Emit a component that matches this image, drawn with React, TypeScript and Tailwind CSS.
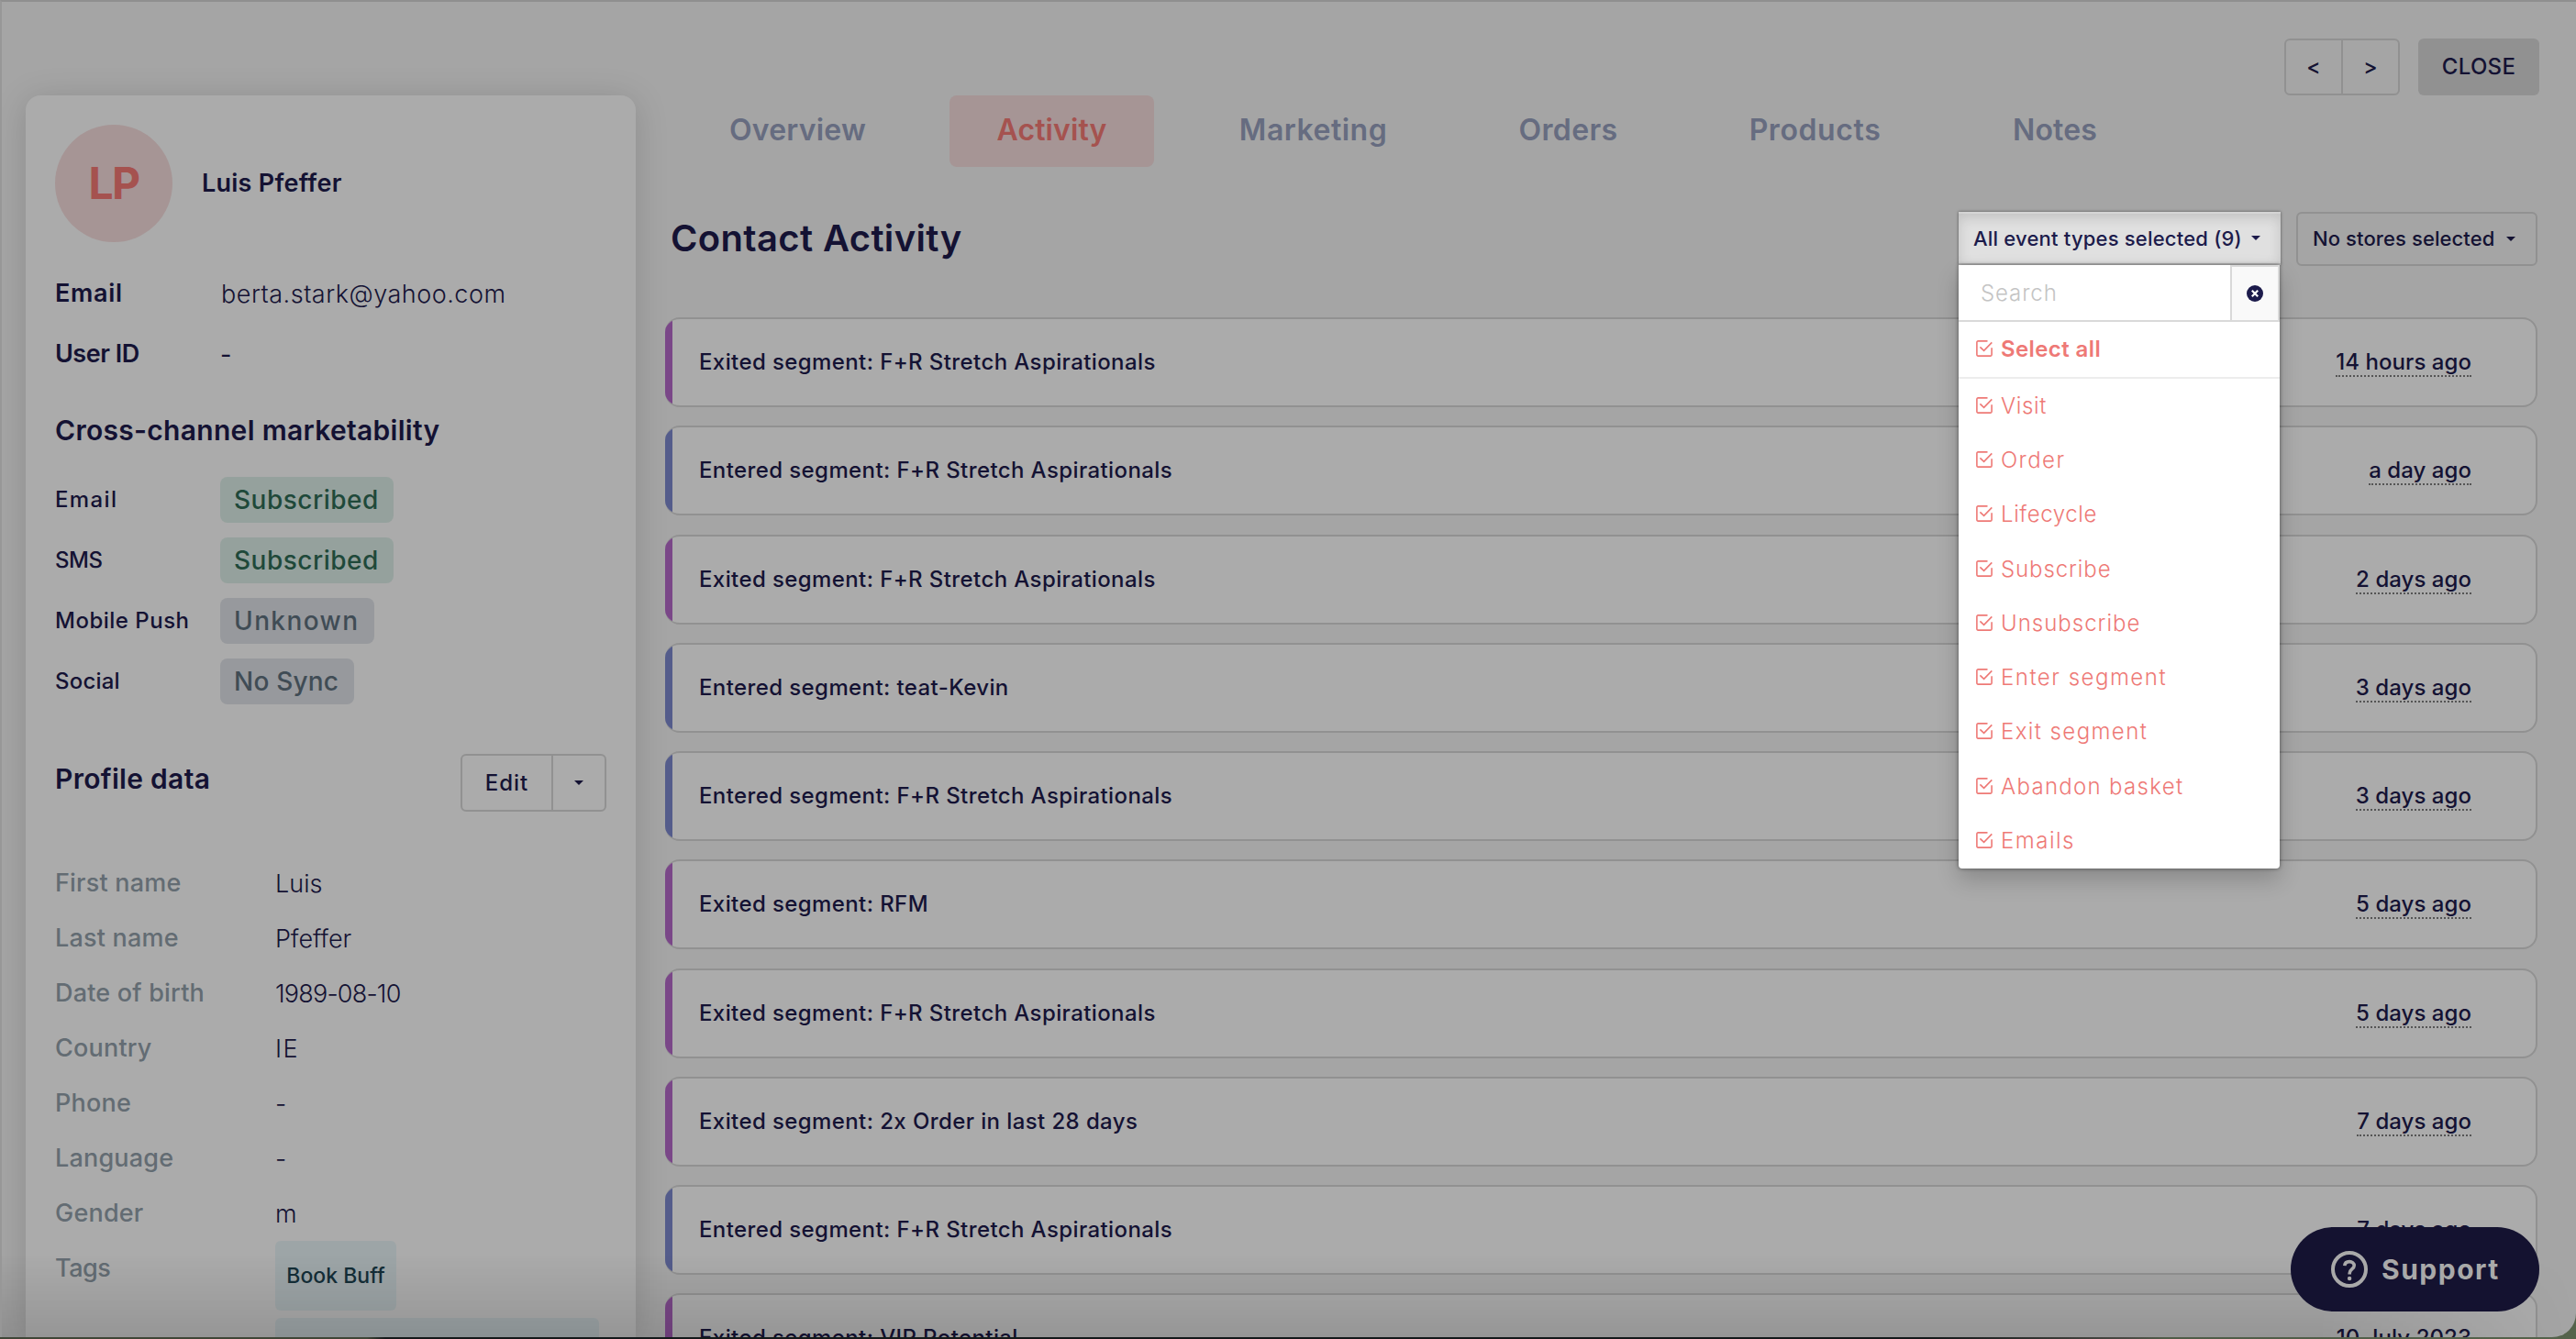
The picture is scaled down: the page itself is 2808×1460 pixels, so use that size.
import type { ReactNode } from 'react'

const tabs = [
  { label: 'Overview', cls: 'w-[251px] tracking-[0.2px] text-[#666c80]' },
  { label: 'Activity', cls: 'w-[223px] tracking-[0.1px] text-[#a5524f] bg-[#a69595] rounded-lg' },
  { label: 'Marketing', cls: 'w-[267px] tracking-[0.5px] text-[#666c80]' },
  { label: 'Orders', cls: 'w-[209px] tracking-[0.4px] text-[#666c80]' },
  { label: 'Products', cls: 'w-[249px] tracking-[0.6px] text-[#666c80]' },
  { label: 'Notes', cls: 'w-[194px] tracking-[0.1px] text-[#666c80]' },
]

const channels = [
  { label: 'Email', value: 'Subscribed', labelCls: 'tracking-[1.4px]', cls: 'w-[189px] tracking-[0.5px] bg-[#95a19d] text-[#1f493a]' },
  { label: 'SMS', value: 'Subscribed', labelCls: '-tracking-[0.4px]', cls: 'w-[189px] tracking-[0.5px] bg-[#95a19d] text-[#1f493a]' },
  { label: 'Mobile Push', value: 'Unknown', labelCls: 'tracking-[0.5px]', cls: 'w-[168px] tracking-[1.4px] bg-[#97999d] text-[#404c55]' },
  { label: 'Social', value: 'No Sync', labelCls: 'tracking-[0.2px]', cls: 'w-[146px] tracking-[0.2px] bg-[#97999d] text-[#404c55]' },
]

const profile = [
  { label: 'First name', value: 'Luis', cls: '' },
  { label: 'Last name', value: 'Pfeffer', cls: '-tracking-[0.1px]' },
  { label: 'Date of birth', value: '1989-08-10', cls: '-tracking-[0.8px]' },
  { label: 'Country', value: 'IE', cls: 'tracking-[1.5px]' },
  { label: 'Phone', value: '-', cls: '' },
  { label: 'Language', value: '-', cls: '' },
  { label: 'Gender', value: 'm', cls: '' },
]

const purple = 'bg-[#7a4788]'
const blue = 'bg-[#545c8b]'

const events = [
  { text: 'Exited segment: F+R Stretch Aspirationals', when: '14 hours ago', bar: purple },
  { text: 'Entered segment: F+R Stretch Aspirationals', when: 'a day ago', bar: blue },
  { text: 'Exited segment: F+R Stretch Aspirationals', when: '2 days ago', bar: purple },
  { text: 'Entered segment: teat-Kevin', when: '3 days ago', bar: blue },
  { text: 'Entered segment: F+R Stretch Aspirationals', when: '3 days ago', bar: blue },
  { text: 'Exited segment: RFM', when: '5 days ago', bar: purple },
  { text: 'Exited segment: F+R Stretch Aspirationals', when: '5 days ago', bar: purple },
  { text: 'Exited segment: 2x Order in last 28 days', when: '7 days ago', bar: purple },
  { text: 'Entered segment: F+R Stretch Aspirationals', when: '7 days ago', bar: blue },
  { text: 'Exited segment: VIP Potential', when: '10 July 2023', bar: purple },
]

const eventTypes = [
  { label: 'Visit', cls: 'tracking-[0.6px]' },
  { label: 'Order', cls: 'tracking-[1.4px]' },
  { label: 'Lifecycle', cls: 'tracking-[0.6px]' },
  { label: 'Subscribe', cls: 'tracking-[0.9px]' },
  { label: 'Unsubscribe', cls: 'tracking-[1px]' },
  { label: 'Enter segment', cls: 'tracking-[1.5px]' },
  { label: 'Exit segment', cls: 'tracking-[1.4px]' },
  { label: 'Abandon basket', cls: 'tracking-[1.3px]' },
  { label: 'Emails', cls: 'tracking-[1.5px]' },
]

function Caret() {
  return (
    <svg width="10" height="5" viewBox="0 0 10 5" fill="currentColor" className="shrink-0">
      <path d="M0 0h10L5 5z" />
    </svg>
  )
}

function CheckSquare() {
  return (
    <svg width="18" height="18" viewBox="0 0 18 18" fill="none" stroke="currentColor" strokeWidth="1.6" className="mb-[2px] shrink-0">
      <path d="M12.5 .9H2.2A1.3 1.3 0 0 0 .9 2.2v13.6a1.3 1.3 0 0 0 1.3 1.3h13.6a1.3 1.3 0 0 0 1.3-1.3V8.2" />
      <path d="M4.4 7.4 8.6 11.4 17.3 2.4" />
    </svg>
  )
}

function SectionTitle({ children }: { children: ReactNode }) {
  return <h3 className="text-[30px] font-semibold tracking-[0.3px]">{children}</h3>
}

function Sidebar() {
  return (
    <aside className="relative ml-[26px] flex h-[1354px] w-[665px] shrink-0 flex-col rounded-t-2xl bg-[#ababab] px-8 pt-8 shadow-[0_4px_36px_rgba(0,0,0,0.15)]">
      <div className="flex h-32 shrink-0 items-center">
        <div className="flex size-32 items-center justify-center rounded-full bg-[#a69595] text-[48px] font-bold -tracking-[1.5px] text-[#a5524f]">LP</div>
        <div className="ml-8 text-[27px] font-semibold tracking-[0.25px]">Luis Pfeffer</div>
      </div>

      <div className="mt-[23px] flex h-[66px] shrink-0 items-center text-[27px]">
        <div className="w-[181px] pt-px font-semibold tracking-[0.7px]">Email</div>
        <div className="pt-[3px] font-[350] tracking-[0.5px]">berta.stark@yahoo.com</div>
      </div>
      <div className="flex h-[66px] shrink-0 items-center text-[27px]">
        <div className="w-[180px] pt-px font-semibold -tracking-[0.5px]">User ID</div>
        <div className="pt-[3px]">-</div>
      </div>

      <div className="mt-[17px] flex h-[67px] shrink-0 items-center">
        <SectionTitle>Cross-channel marketability</SectionTitle>
      </div>
      <div className="mt-[9px] flex shrink-0 flex-col">
        {channels.map((c) => (
          <div key={c.label} className="flex h-[66px] items-center">
            <div className={`w-[180px] text-[24px] font-[480] ${c.labelCls}`}>{c.label}</div>
            <div className={`flex h-[50px] items-center rounded-lg pl-[15px] text-[28px] font-[480] ${c.cls}`}>{c.value}</div>
          </div>
        ))}
      </div>

      <div className="mt-[46px] flex h-[63px] shrink-0 justify-between">
        <div className="flex h-[55px] items-center">
          <SectionTitle>Profile data</SectionTitle>
        </div>
        <div className="flex w-[159px] rounded-md border-2 border-[#919191]">
          <div className="flex w-[97px] items-center justify-center text-[24px] font-[480] tracking-[1px]">Edit</div>
          <div className="flex flex-1 items-center justify-center border-l-2 border-[#919191]">
            <Caret />
          </div>
        </div>
      </div>

      <div className="mt-[47px] flex shrink-0 flex-col text-[27px]">
        {profile.map((p) => (
          <div key={p.label} className="flex h-[60px] items-center pt-[2px]">
            <div className="w-[240px] font-[500] tracking-[0.2px] text-[#636c73]">{p.label}</div>
            <div className={`pt-[2px] font-[350] ${p.cls}`}>{p.value}</div>
          </div>
        ))}
        <div className="flex">
          <div className="flex h-[60px] w-[240px] items-center pt-[2px] font-[500] -tracking-[0.5px] text-[#636c73]">Tags</div>
          <div className="flex flex-col items-start gap-2 pt-px">
            <div className="flex h-[76px] w-[132px] items-center justify-center rounded-md bg-[#9da5a7] text-[23px] font-[550] text-[#142e38]">Book Buff</div>
            <div className="h-[76px] w-[353px] rounded-md bg-[#9da5a7]" />
          </div>
        </div>
      </div>
    </aside>
  )
}

function EventTypeFilter() {
  return (
    <div className="relative z-10 h-[58px] w-[351px] text-[#1c1b4b]">
      <div className="flex h-[58px] items-center justify-between border-b-2 border-[#b5b5b5] bg-[#e0e0e0] pl-[16px] pr-[22px] shadow-[inset_0_6px_14px_rgba(0,0,0,0.14),inset_0_2px_0_#efefef,0_0_3px_rgba(0,0,0,0.5)]">
        <span className="whitespace-nowrap pt-[2px] text-[22px] font-[480] tracking-[0.2px]">All event types selected (9)</span>
        <Caret />
      </div>
      <div className="absolute left-0 top-[58px] w-[350px] rounded-b bg-white shadow-[0_12px_24px_rgba(0,0,0,0.2),0_0_4px_rgba(0,0,0,0.45)]">
        <div className="flex h-[62px] border-b-2 border-[#d9d9d9]">
          <div className="flex flex-1 items-center pl-[24px] pt-px text-[24px] font-light tracking-[0.9px] text-[#c4c4c4]">Search</div>
          <div className="flex w-[54px] items-center justify-center border-x-2 border-t-2 border-[#d9d9d9] bg-[#f9f9f9]">
            <svg width="18" height="18" viewBox="0 0 18 18">
              <circle cx="9" cy="9" r="9" fill="currentColor" />
              <path d="M5.8 5.8l6.4 6.4M12.2 5.8l-6.4 6.4" stroke="white" strokeWidth="2.2" />
            </svg>
          </div>
        </div>
        <div className="flex h-[62px] items-center gap-[9px] border-b-2 border-[#ededed] pl-[19px] text-[24px] font-semibold tracking-[0.4px] text-[#ee7976]">
          <CheckSquare />
          Select all
        </div>
        <div className="flex flex-col text-[24px] font-[350] text-[#ee7976]">
          {eventTypes.map((t) => (
            <div key={t.label} className={`flex h-[59.3px] items-center gap-[9px] pl-[19px] ${t.cls}`}>
              <CheckSquare />
              {t.label}
            </div>
          ))}
        </div>
      </div>
    </div>
  )
}

function Activity() {
  return (
    <main className="relative ml-8 flex h-[1354px] w-[2041px] flex-col">
      <nav className="ml-[19px] flex h-[78px] shrink-0 gap-10">
        {tabs.map((t) => (
          <div key={t.label} className={`flex items-center justify-center pb-[2px] text-[32px] font-semibold ${t.cls}`}>{t.label}</div>
        ))}
      </nav>

      <div className="mt-[49px] flex h-[58px] shrink-0 items-center">
        <h2 className="ml-[6px] flex-1 text-[40px] font-semibold tracking-[0.35px]">Contact Activity</h2>
        <EventTypeFilter />
        <div className="ml-[17px] flex h-[59px] w-[263px] items-center justify-between rounded-md border-2 border-[#919191] pl-[16px] pr-[22px]">
          <span className="whitespace-nowrap text-[22px] font-[480] tracking-[0.1px]">No stores selected</span>
          <Caret />
        </div>
      </div>

      <div className="mt-[57px] flex flex-col gap-[20.25px]">
        {events.map((e, i) => (
          <div key={i} className="flex h-[98px] shrink-0 overflow-hidden rounded-2xl border-2 border-l-0 border-[#919191] bg-[#ababab] text-[24px] font-[480]">
            <div className={`w-2 shrink-0 ${e.bar}`} />
            <div className="flex flex-1 items-center justify-between pl-[29px] pr-[70px]">
              <span className="tracking-[0.4px]">{e.text}</span>
              <span className="mt-px border-b-2 border-dotted border-[#555] leading-[29px] tracking-[0.05px]">{e.when}</span>
            </div>
          </div>
        ))}
      </div>
    </main>
  )
}

export default function App() {
  return (
    <div className="h-[1460px] w-[2808px] overflow-hidden bg-[linear-gradient(90deg,#3f4637_0px,#3f4637_400px,#14191a_420px,#14191a_2100px,#4a4a44_2320px,#4f5c48_2360px,#55634b_2808px)] font-['Inter',sans-serif] text-[#141233]">
      <div className="relative flex h-[1458px] w-[2808px] flex-col overflow-hidden rounded-br-[26px] border-l-2 border-t-2 border-l-[#979797] border-t-[#8f8f8f] bg-[#a5a5a5]">
        <header className="flex h-[102px] shrink-0 items-start justify-end pr-10 pt-10">
          <div className="flex h-[62px] w-[126px] rounded-md border-2 border-[#919191] text-[23px] font-[500]">
            <div className="flex w-[60px] items-center justify-center">&lt;</div>
            <div className="flex flex-1 items-center justify-center border-l-2 border-[#919191]">&gt;</div>
          </div>
          <div className="ml-5 flex h-[62px] w-[132px] items-center justify-center rounded-md bg-[#919191] text-[24px] font-[480] tracking-[0.3px]">CLOSE</div>
        </header>

        <div className="flex">
          <Sidebar />
          <Activity />
        </div>

        <div className="absolute bottom-0 left-0 h-[90px] w-full bg-linear-to-b from-transparent to-black/12 mask-r-from-90%" />

        <button className="absolute bottom-[28px] right-[40px] flex h-[92px] w-[271px] items-center rounded-full bg-[#141230] pl-[44px] text-[#a9a9a9]">
          <svg width="40" height="40" viewBox="0 0 40 40" fill="none" stroke="currentColor">
            <circle cx="20" cy="20" r="18" strokeWidth="4" />
            <path d="M14.8 16.2c.2-2.9 2.3-4.6 5.2-4.6 3 0 5.2 1.8 5.2 4.4 0 3.6-5 3.8-5 8.2v1.3" strokeWidth="3.6" />
            <circle cx="20.1" cy="30" r="2.2" fill="currentColor" stroke="none" />
          </svg>
          <span className="ml-[15px] text-[30px] font-bold tracking-[1.5px]">Support</span>
        </button>
      </div>
    </div>
  )
}
